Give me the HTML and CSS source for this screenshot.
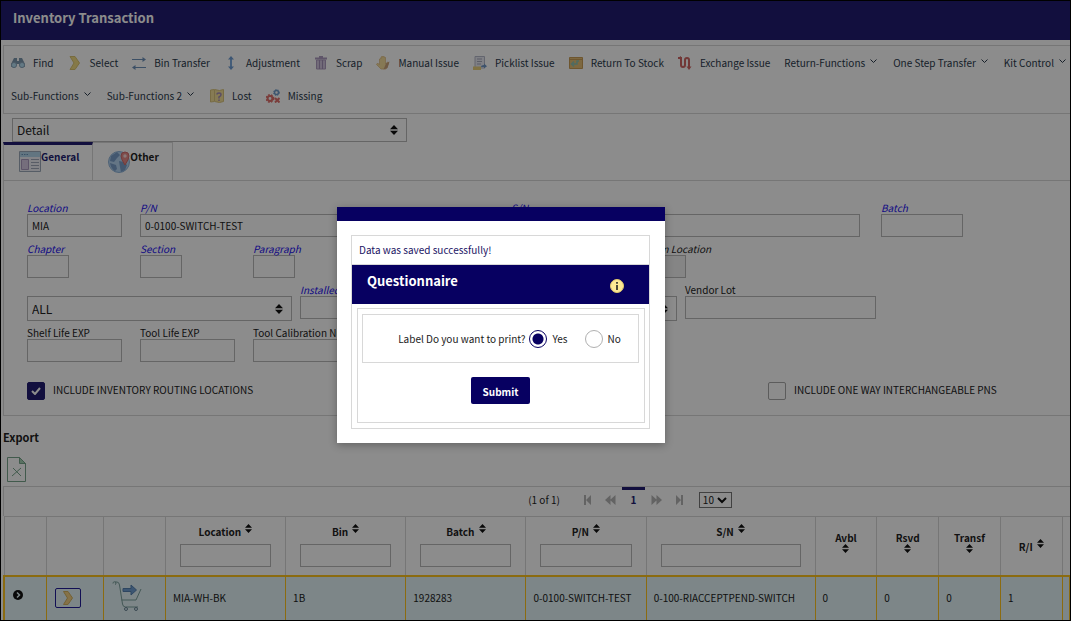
FILE: index.html
```html
<!DOCTYPE html>
<html lang="en">
  <head>
    <meta charset="UTF-8" />
    <meta name="viewport" content="width=device-width, initial-scale=1.0" />
    <title>Inventory Transaction</title>
    <link rel="stylesheet" href="styles.css" />
  </head>
  <body>
    <header class="page-header">
      <h1>Inventory Transaction</h1>
    </header>

    <nav class="toolbar">
      <button class="tool">
        <svg viewBox="0 0 14 14"><path d="M3 2h3v3h2V2h3l3 6v3H9V8H5v3H0V8z" fill="#7d97ad"/><circle cx="3" cy="9" r="2.6" fill="#b4dcf0" stroke="#8ba5ba"/><circle cx="11" cy="9" r="2.6" fill="#b4dcf0" stroke="#8ba5ba"/></svg>
        Find
      </button>
      <button class="tool">
        <svg viewBox="0 0 14 14"><path d="M2 .5h5l4.500 6.500L7 13.500H2L6 7z" fill="#f3dc84" stroke="#d9c373"/></svg>
        Select
      </button>
      <button class="tool">
        <svg viewBox="0 0 14 14"><path d="M0 3.500h13M14 11.500H1" stroke="#6d90b9" fill="none"/><path d="M10.500 1 14 3.500 10.500 6zM3.500 9 0 11.500 3.500 14z" fill="#6d90b9"/></svg>
        Bin Transfer
      </button>
      <button class="tool">
        <svg viewBox="0 0 14 14"><path d="M7 2v10" stroke="#7da9dc" stroke-width="2"/><path d="M4 3.500 7 0l3 3.500zM4 10.500 7 14l3-3.500z" fill="#6d9cd2"/></svg>
        Adjustment
      </button>
      <button class="tool">
        <svg viewBox="0 0 14 14"><path d="M1 2.500h12M5 1h4" stroke="#ae9cc0" stroke-width="2"/><path d="M2.500 4h9v9h-9z" fill="#d0c3dc" stroke="#ae9cc0"/><path d="M5.500 4v9M8.500 4v9" stroke="#a390b7"/></svg>
        Scrap
      </button>
      <button class="tool">
        <svg viewBox="0 0 14 14"><path d="M3.500 8.500V3q.8-1 1.500 0V1q.8-1 1.500 0V.5q.8-1 1.500 0v1q.8-1 1.500 0V8l2-2q1.500 0 1 1.500L10 13H5L.5 8.500Q1 7 2 7.500z" fill="#f4dd9c" stroke="#dcb97c" stroke-width=".7"/><path d="M10 7.500l3.500-2L11.500 12l-4 1.500z" fill="#c9a27c"/></svg>
        Manual Issue
      </button>
      <button class="tool">
        <svg viewBox="0 0 14 14"><path d="M2 .5h9.500V12H2z" fill="#e8e9f3" stroke="#b5b8c8"/><path d="M4 3h5M4 5.500h5M4 8h4" stroke="#a6a9bb"/><path d="M0 10.500h8V14H0z" fill="#e9cf7c"/><path d="M8 11q0-2 3-2V7.500l3 2.700-3 2.300V11z" fill="#6f96c5"/></svg>
        Picklist Issue
      </button>
      <button class="tool">
        <svg viewBox="0 0 14 14"><path d="M.5 1.500h13v11H.5z" fill="#e3bd76" stroke="#c89d57"/><path d="M0 3.500h14" stroke="#c89d57"/><path d="M10 5H8v3H3M5 5.500 2.500 8 5 10.500" fill="none" stroke="#8ec4b3" stroke-width="1.500"/></svg>
        Return To Stock
      </button>
      <button class="tool">
        <svg viewBox="0 0 14 14"><path d="M0 2h3v7q0 2 2 2t2-2V4q0-2 2-2t2 2v8" fill="none" stroke="#cf6664" stroke-width="2"/><path d="M8.500 10.500h5L11 14zM3 0v4L0 2z" fill="#cf6664"/></svg>
        Exchange Issue
      </button>
      <button class="tool menu">Return-Functions <svg viewBox="0 0 7 4"><path d="M.5.500l3 3 3-3"/></svg></button>
      <button class="tool menu">One Step Transfer <svg viewBox="0 0 7 4"><path d="M.5.500l3 3 3-3"/></svg></button>
      <button class="tool menu">Kit Control <svg viewBox="0 0 7 4"><path d="M.5.500l3 3 3-3"/></svg></button>
      <button class="tool menu">Sub-Functions <svg viewBox="0 0 7 4"><path d="M.5.500l3 3 3-3"/></svg></button>
      <button class="tool menu">Sub-Functions 2 <svg viewBox="0 0 7 4"><path d="M.5.500l3 3 3-3"/></svg></button>
      <button class="tool">
        <svg viewBox="0 0 14 14"><path d="M.5 1l4-.5 5 1 4-1v12l-4 1-5-1-4 .5z" fill="#f4e09a" stroke="#d9c47d"/><path d="M4.500 1v11" stroke="#d9c47d"/><path d="M7 5.500Q7 4 9 4t2 1.700Q11 7 9 8v1.500M9 10.500V12" fill="none" stroke="#a48cb8" stroke-width="1.500"/></svg>
        Lost
      </button>
      <button class="tool">
        <svg viewBox="0 0 14 14"><circle cx="10.500" cy="3.500" r="2" fill="none" stroke="#6f9ccb" stroke-width="1.500"/><circle cx="10.500" cy="3.500" r="3" fill="none" stroke="#6f9ccb" stroke-dasharray="1.200 1.300"/><circle cx="4" cy="9.500" r="2.400" fill="none" stroke="#e0706c" stroke-width="2"/><circle cx="4" cy="9.500" r="3.700" fill="none" stroke="#e0706c" stroke-width="1.500" stroke-dasharray="1.700 1.300"/><path d="M9 9l4.500 4.500M13.500 9 9 13.500" stroke="#e0706c" stroke-width="2"/></svg>
        Missing
      </button>
    </nav>

    <select class="select view-select" aria-label="View">
      <option>Detail</option>
    </select>

    <div class="tabs">
      <button class="tab active">
        <svg viewBox="0 0 22 22"><path d="M.5.500h21v20H.5z" fill="#eeeff6" stroke="#9daabb"/><path d="M1 1h20v5H1z" fill="#b3d5eb"/><path d="M2.500 3.500h1.500M5 3.500h1.500M7.500 3.500H9" stroke="#6a93b8"/><path d="M2.500 8.500h7v10h-7z" fill="#d5c9e2" stroke="#aa9abd"/><path d="M12 8.500h8M12 11.500h8M12 14.500h8M12 17.500h8" stroke="#a0a8bb"/></svg>
        General
      </button>
      <button class="tab">
        <svg viewBox="0 0 22 22"><circle cx="11" cy="11" r="10.500" fill="#b6d5f2" stroke="#8fb3d8"/><path d="M3 5l6-4 3 3-3 3-3 4-4-1zM2 12l6 2 1 4-2 2q-4-2-5-8zM11 10l5 1 3 3-2 5-4 2-1-5z" fill="#7a9fca"/><path d="M17 14q-4-6-4-9a4 4 0 0 1 8 0q0 3-4 9z" fill="#e88a88" stroke="#d06c6c"/><circle cx="17" cy="5" r="1.700" fill="#f6dada"/></svg>
        Other
      </button>
    </div>

    <main class="panel">
      <div class="row row-part">
        <div class="field">
          <label class="lookup" for="location">Location</label>
          <input type="text" id="location" value="MIA" />
        </div>
        <div class="field">
          <label class="lookup" for="pn">P/N</label>
          <input type="text" id="pn" value="0-0100-SWITCH-TEST" />
        </div>
        <div class="field wide">
          <label class="lookup" for="sn">S/N</label>
          <input type="text" id="sn" />
        </div>
        <div class="field">
          <label class="lookup" for="batch">Batch</label>
          <input type="text" id="batch" class="medium" />
        </div>
      </div>

      <div class="row row-chapter">
        <div class="field">
          <label class="lookup" for="chapter">Chapter</label>
          <input type="text" id="chapter" class="short" />
        </div>
        <div class="field">
          <label class="lookup" for="section">Section</label>
          <input type="text" id="section" class="short" />
        </div>
        <div class="field">
          <label class="lookup" for="paragraph">Paragraph</label>
          <input type="text" id="paragraph" class="short" />
        </div>
        <div class="field">
          <label class="italic" for="fromLocation">From Location</label>
          <input type="text" id="fromLocation" class="short" readonly />
        </div>
      </div>

      <div class="row row-vendor">
        <div class="field narrow-gap bottom">
          <select class="select" aria-label="Condition">
            <option>ALL</option>
          </select>
        </div>
        <div class="field narrow-gap">
          <label class="lookup" for="installed">Installed</label>
          <input type="text" id="installed" />
        </div>
        <div class="field narrow-gap bottom">
          <select class="select" aria-label="Owner">
            <option></option>
          </select>
        </div>
        <div class="field narrow-gap">
          <label for="vendorLot">Vendor Lot</label>
          <input type="text" id="vendorLot" />
        </div>
      </div>

      <div class="row row-life">
        <div class="field">
          <label for="shelfLife">Shelf Life EXP</label>
          <input type="text" id="shelfLife" />
        </div>
        <div class="field">
          <label for="toolLife">Tool Life EXP</label>
          <input type="text" id="toolLife" />
        </div>
        <div class="field">
          <label for="toolCal">Tool Calibration Number</label>
          <input type="text" id="toolCal" />
        </div>
      </div>

      <div class="row row-checks">
        <label class="check"><input type="checkbox" checked /> INCLUDE INVENTORY ROUTING LOCATIONS</label>
        <label class="check"><input type="checkbox" /> INCLUDE ONE WAY INTERCHANGEABLE PNS</label>
      </div>
    </main>

    <section class="export">
      <h2>Export</h2>
      <button class="export-btn" aria-label="Export to Excel">
        <svg viewBox="0 0 19 25"><path d="M.5.500h12l6 6v18H.5z" fill="none" stroke="#77a58b"/><path d="M12.500.500v6h6z" fill="#a5d0b3" stroke="#77a58b"/><path d="M6 11l8 8M14 11l-9 8" stroke="#77a58b"/></svg>
      </button>
    </section>

    <div class="pager">
      <span class="pager-count">(1 of 1)</span>
      <button aria-label="First page"><svg viewBox="0 0 11 10"><path d="M2 0h2v10H2zM9 0v10L4 5z"/></svg></button>
      <button aria-label="Previous page"><svg viewBox="0 0 11 10"><path d="M5.500 0v10L0 5zM10.500 0v10L5 5z"/></svg></button>
      <button class="current">1</button>
      <button aria-label="Next page"><svg viewBox="0 0 11 10"><path d="M.5 0v10L6 5zM5.500 0v10L11 5z"/></svg></button>
      <button aria-label="Last page"><svg viewBox="0 0 11 10"><path d="M7 0h2v10H7zM2 0v10l5-5z"/></svg></button>
      <select class="page-size" aria-label="Rows per page">
        <option>10</option>
      </select>
    </div>

    <table class="results">
      <colgroup>
        <col class="c-toggle" />
        <col class="c-pick" />
        <col class="c-cart" />
        <col class="c-text" />
        <col class="c-text" />
        <col class="c-text" />
        <col class="c-text" />
        <col class="c-serial" />
        <col class="c-qty" />
        <col class="c-qty" />
        <col class="c-qty" />
        <col class="c-qty" />
        <col class="c-rest" />
      </colgroup>
      <thead>
        <tr>
          <th></th>
          <th></th>
          <th></th>
          <th>Location <i class="sort"></i><input type="text" aria-label="Filter location" /></th>
          <th>Bin <i class="sort"></i><input type="text" aria-label="Filter bin" /></th>
          <th>Batch <i class="sort"></i><input type="text" aria-label="Filter batch" /></th>
          <th>P/N <i class="sort"></i><input type="text" aria-label="Filter P/N" /></th>
          <th>S/N <i class="sort"></i><input type="text" aria-label="Filter S/N" /></th>
          <th class="stacked">Avbl<i class="sort"></i></th>
          <th class="stacked">Rsvd<i class="sort"></i></th>
          <th class="stacked">Transf<i class="sort"></i></th>
          <th class="inline">R/I <i class="sort"></i></th>
          <th></th>
        </tr>
      </thead>
      <tbody>
        <tr>
          <td class="icon-cell">
            <button class="expand" aria-label="Expand row"><svg viewBox="0 0 10 10"><circle cx="5" cy="5" r="5" fill="#111"/><path d="M4 2.500 6.500 5 4 7.500" fill="none" stroke="#e3f5f8" stroke-width="1.500"/></svg></button>
          </td>
          <td class="icon-cell">
            <button class="pick" aria-label="Select row"><svg viewBox="0 0 14 14"><path d="M2.500.500h4.500l4.500 6.500L7 13.500H2.500L6.500 7z" fill="#f3cf84" stroke="#d3b25f"/></svg></button>
          </td>
          <td class="icon-cell">
            <button class="cart" aria-label="Add to cart"><svg viewBox="0 0 30 30"><path d="M1 2.500a1.500 1.500 0 1 1 2 1.200M3 1h2q2 0 2.500 3l3 19q.5 3 3 3H26M9.500 19H24l5-11" fill="none" stroke="#7b9f9c"/><path d="M11 7.500h8V4l5.500 5-5.500 5v-3.500h-8z" fill="#6e9dd2" stroke="#5580b0"/><circle cx="14" cy="28" r="1.500" fill="none" stroke="#6b8496"/><circle cx="24" cy="28" r="1.500" fill="none" stroke="#6b8496"/></svg></button>
          </td>
          <td>MIA-WH-BK</td>
          <td>1B</td>
          <td>1928283</td>
          <td>0-0100-SWITCH-TEST</td>
          <td>0-100-RIACCEPTPEND-SWITCH</td>
          <td>0</td>
          <td>0</td>
          <td>0</td>
          <td>1</td>
          <td></td>
        </tr>
      </tbody>
    </table>

    <div class="overlay"></div>

    <div class="modal" role="dialog" aria-label="Questionnaire">
      <div class="modal-bar"></div>
      <div class="modal-body">
        <p class="message">Data was saved successfully!</p>
        <div class="modal-title">
          <h2>Questionnaire</h2>
          <svg class="info" viewBox="0 0 14 14"><circle cx="7" cy="7" r="6.500" fill="#fde995" stroke="#e3cb6d"/><path d="M7 3v1.700M7 6v5" stroke="#4d4937" stroke-width="2"/></svg>
        </div>
        <form class="modal-form">
          <div class="question">
            <span>Label Do you want to print?</span>
            <label><input type="radio" name="print" checked /> Yes</label>
            <label class="no"><input type="radio" name="print" /> No</label>
          </div>
          <button type="button" class="submit">Submit</button>
        </form>
      </div>
    </div>
  </body>
</html>
```

FILE: styles.css
```css
* {
  margin: 0;
  padding: 0;
  box-sizing: border-box;
}
body {
  position: relative;
  height: 100vh;
  overflow: hidden;
  border: 1px solid #000;
  background: #fff;
  color: #222;
  font-family: "Noto Sans CJK SC", "Noto Sans", sans-serif;
  font-size: 10px;
  line-height: 12px;
}
button,
input,
select {
  font: inherit;
  color: inherit;
}
button {
  background: none;
  border: none;
  cursor: pointer;
}
svg {
  display: block;
}

.page-header {
  height: 39px;
  padding: 8px 12px;
  background: #211d71;
  color: #fff;
}
.page-header h1 {
  font-size: 13px;
  line-height: 18px;
}

.toolbar {
  display: flex;
  flex-wrap: wrap;
  column-gap: 14px;
  margin: 5px 0 0 2px;
  padding: 0 0 1px 7px;
  border: 1px solid #d8d8d8;
  border-right: none;
}
.tool {
  display: flex;
  align-items: center;
  gap: 8px;
  height: 33px;
  color: #2b3a4c;
  white-space: nowrap;
}
.tool svg {
  width: 14px;
  height: 14px;
}
.tool.menu {
  gap: 5px;
  margin-right: 2px;
}
.tool.menu svg {
  width: 7px;
  height: 4px;
  margin-bottom: 4px;
  fill: none;
  stroke: #2b3a4c;
}

input[type="text"],
.select {
  display: block;
  width: 100%;
  height: 23px;
  padding: 0 4px;
  border: 1px solid #b9b9b9;
  background: #fff;
}
input[readonly] {
  background: #f2f2f2;
}
.select {
  appearance: none;
  height: 25px;
  font-size: 12px;
  background: #fff url("data:image/svg+xml,%3Csvg xmlns='http://www.w3.org/2000/svg' width='8' height='10'%3E%3Cpath d='M0 4.300 4 0l4 4.300zM0 5.700 4 10l4-4.300z' fill='%23111'/%3E%3C/svg%3E") no-repeat right 8px center;
}
.view-select {
  width: 395px;
  height: 24px;
  margin: 4px 0 0 11px;
}

.tabs {
  display: flex;
  margin-left: 2px;
}
.tab {
  display: flex;
  align-items: flex-start;
  height: 38px;
  padding: 8px 13px 0 15px;
  border-top: 1px solid #d8d8d8;
  border-right: 1px solid #d8d8d8;
  font-weight: bold;
}
.tab svg {
  width: 22px;
  height: 22px;
}
.tab.active {
  padding-top: 6px;
  border-top: 3px solid #211d71;
  border-left: 1px solid #d8d8d8;
  color: #211d71;
}

.panel {
  margin-left: 2px;
  padding: 21px 0 15px 23px;
  border: 1px solid #d8d8d8;
  border-right: none;
}
.row {
  display: grid;
  margin-bottom: 6px;
}
.row-part {
  grid-template-columns: 113fr 371fr 370fr 189fr;
}
.row-chapter {
  grid-template-columns: 113fr 113fr 391fr 426fr;
}
.row-vendor {
  grid-template-columns: 273fr 192fr 193fr 199fr 186fr;
}
.row-life {
  grid-template-columns: 113fr 113fr 113fr 704fr;
}
.row-checks {
  grid-template-columns: 741fr 302fr;
  margin: 20px 0 0;
}
.field {
  min-width: 0;
  padding-right: 18px;
}
.field.wide {
  padding-right: 21px;
}
.field.narrow-gap {
  padding-right: 8px;
}
.field.bottom {
  padding-top: 12px;
}
.field label {
  display: block;
  margin-bottom: 1px;
  line-height: 11px;
  white-space: nowrap;
}
.field .lookup {
  color: #1c10f0;
  font-style: italic;
}
.field .italic {
  font-style: italic;
}
.field .short {
  width: 42px;
}
.field .medium {
  width: 82px;
}
.check {
  display: flex;
  gap: 8px;
  line-height: 16px;
}
.check input {
  appearance: none;
  width: 18px;
  height: 18px;
  border: 1px solid #a8a8a8;
  border-radius: 2px;
}
.check input:checked {
  border-color: #211d71;
  background: #211d71 url("data:image/svg+xml,%3Csvg xmlns='http://www.w3.org/2000/svg' width='10' height='8'%3E%3Cpath d='M1 4l3 3 5-6' fill='none' stroke='white' stroke-width='2'/%3E%3C/svg%3E") no-repeat center;
}

.export {
  padding: 12px 0 2px 2px;
}
.export h2 {
  font-size: 11px;
  line-height: 18px;
}
.export-btn {
  margin: 11px 0 0 4px;
}
.export-btn svg {
  width: 19px;
  height: 25px;
}

.pager {
  display: flex;
  justify-content: center;
  align-items: flex-start;
  height: 30px;
  margin-left: 2px;
  padding-left: 186px;
  border: 1px solid #d8d8d8;
  border-width: 1px 0 0 1px;
}
.pager-count {
  margin: 7px 16px 0 0;
}
.pager button {
  width: 23px;
  height: 26px;
  padding: 0 6px;
}
.pager button svg {
  width: 11px;
  height: 10px;
  fill: #b4b4b4;
}
.pager .current {
  border-top: 3px solid #211d71;
  padding-bottom: 3px;
  color: #211d71;
  font-weight: bold;
}
.page-size {
  width: 33px;
  height: 16px;
  margin: 5px 0 0 8px;
  padding-left: 3px;
  border: 1px solid #777;
  appearance: none;
  background: url("data:image/svg+xml,%3Csvg xmlns='http://www.w3.org/2000/svg' width='10' height='7'%3E%3Cpath d='M1 1l4 4 4-4' fill='none' stroke='%23111' stroke-width='2'/%3E%3C/svg%3E") no-repeat right 4px center;
}

.results {
  width: calc(100% - 2px);
  margin-left: 2px;
  table-layout: fixed;
  border-collapse: collapse;
}
.c-toggle {
  width: 4%;
}
.c-pick {
  width: 5.35%;
}
.c-cart {
  width: 5.8%;
}
.c-text {
  width: 11.28%;
}
.c-serial {
  width: 15.85%;
}
.c-qty {
  width: 5.8%;
}
.results th {
  height: 59px;
  padding: 0 14px;
  border: 1px solid #d8d8d8;
  border-right-width: 0;
  vertical-align: middle;
  white-space: nowrap;
}
.results th input {
  margin-top: 6px;
}
.results th.stacked,
.results th.inline {
  padding: 0;
}
.results th.stacked {
  padding-bottom: 6px;
}
.sort {
  display: inline-block;
  width: 7px;
  height: 9px;
  margin-left: 2px;
  vertical-align: 3px;
  background: url("data:image/svg+xml,%3Csvg xmlns='http://www.w3.org/2000/svg' width='7' height='9'%3E%3Cpath d='M0 3.700 3.500 0 7 3.700zM0 5.300 3.500 9 7 5.300z' fill='%23111'/%3E%3C/svg%3E");
}
.stacked .sort {
  display: block;
  margin: 0 auto;
}
.results td {
  height: 48px;
  padding: 0 7px 4px;
  border: 1px solid #fdc31e;
  border-top-width: 2px;
  background: #e3f5f8;
  white-space: nowrap;
}
.results td:first-child {
  border-left-width: 2px;
}
.results .icon-cell {
  padding: 0 8px;
  vertical-align: top;
}
.expand {
  margin-top: 13px;
}
.expand svg {
  width: 10px;
  height: 10px;
}
.pick {
  display: block;
  width: 26px;
  height: 20px;
  margin-top: 11px;
  padding: 2px 5px;
  border: 1px solid #211d9a;
  border-radius: 2px;
}
.pick svg {
  width: 14px;
  height: 14px;
}
.cart {
  margin-top: 4px;
}
.cart svg {
  width: 30px;
  height: 30px;
}

.overlay {
  position: absolute;
  inset: 0;
  background: rgba(0, 0, 0, 0.45);
}
.modal {
  position: absolute;
  top: 206px;
  left: 336px;
  width: 328px;
  background: #fff;
  box-shadow: 0 2px 8px rgba(0, 0, 0, 0.3);
}
.modal-bar {
  height: 14px;
  background: #070061;
}
.modal-body {
  margin: 14px 15px 14px 14px;
  border: 1px solid #d8d8d8;
}
.message {
  padding: 8px 7px;
  border-bottom: 1px solid #d8d8d8;
  color: #1b1464;
}
.modal-title {
  display: flex;
  justify-content: space-between;
  height: 39px;
  padding: 7px 25px 0 15px;
  background: #070061;
  color: #fff;
}
.modal-title h2 {
  font-size: 13px;
  line-height: 18px;
}
.info {
  width: 14px;
  height: 14px;
  margin-top: 7px;
}
.modal-form {
  margin: 4px 4px 5px 5px;
  padding: 5px 5px 18px 4px;
  border: 1px solid #d8d8d8;
  text-align: center;
}
.question {
  display: flex;
  justify-content: center;
  align-items: center;
  height: 49px;
  padding-left: 18px;
  border: 1px solid #d8d8d8;
  color: #222;
}
.question label {
  display: flex;
  align-items: center;
  gap: 5px;
  margin-left: 4px;
}
.question .no {
  margin-left: 17px;
}
.question input {
  appearance: none;
  width: 18px;
  height: 18px;
  border: 1px solid #b0b0b0;
  border-radius: 50%;
}
.question input:checked {
  border-color: #070061;
  background: radial-gradient(circle, #070061 5px, #fff 6px);
}
.submit {
  height: 27px;
  margin-top: 14px;
  padding: 3px 12px 0;
  border-radius: 2px;
  background: #070061;
  color: #fff;
  font-weight: bold;
}
```
